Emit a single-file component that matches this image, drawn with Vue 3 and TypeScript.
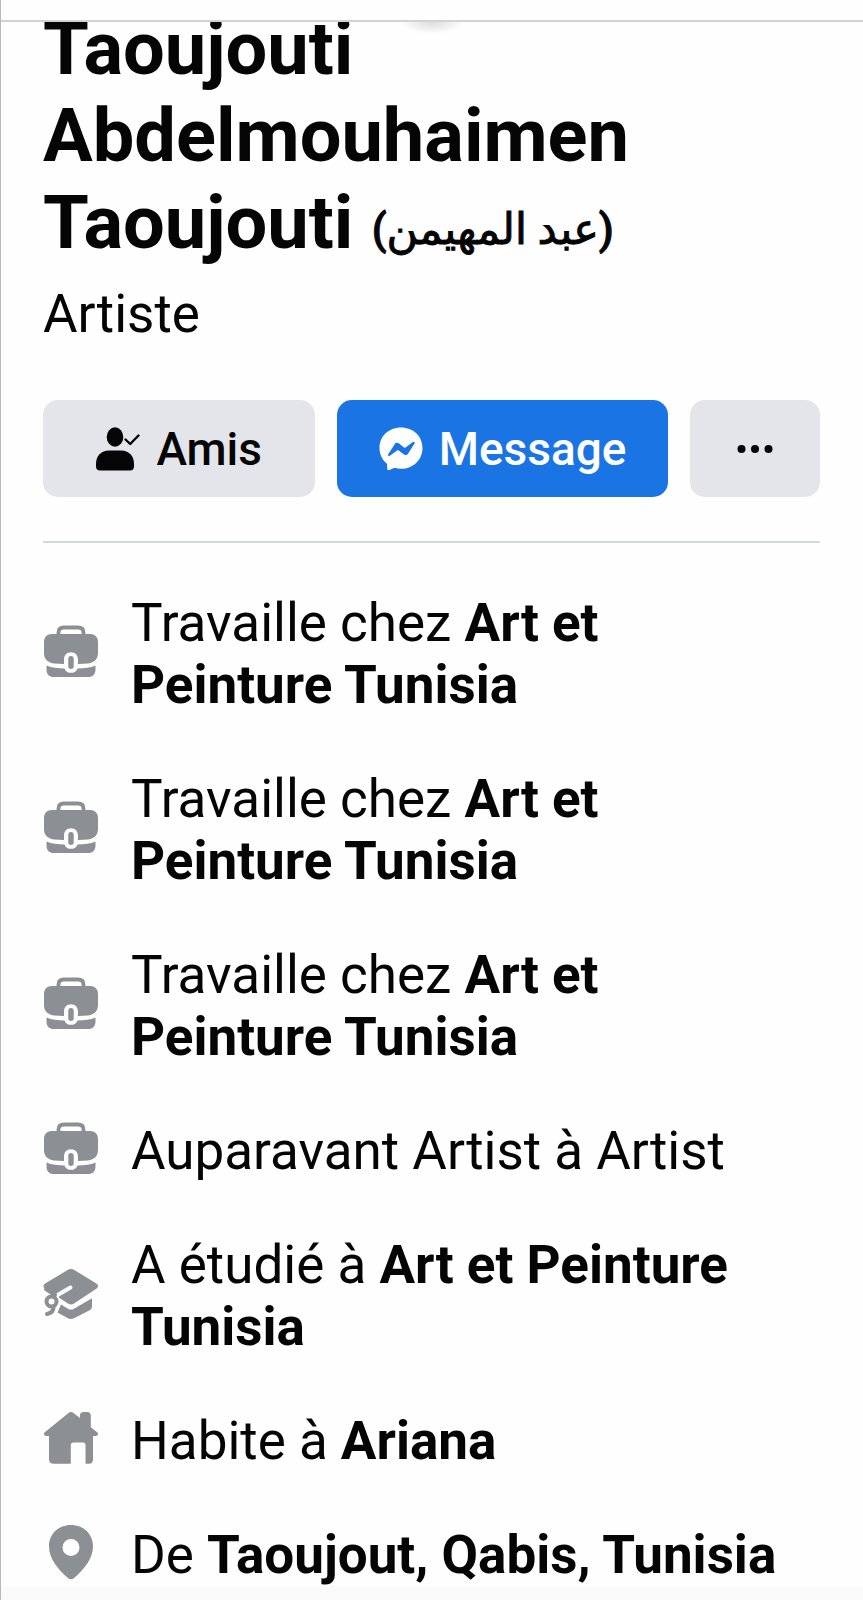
<script setup lang="ts">
type IconName = 'work' | 'study' | 'home' | 'pin'

interface Part {
  text: string
  strong?: boolean
}

interface Detail {
  icon: IconName
  parts: Part[]
}

const details: Detail[] = [
  { icon: 'work', parts: [{ text: 'Travaille chez ' }, { text: 'Art et Peinture Tunisia', strong: true }] },
  { icon: 'work', parts: [{ text: 'Travaille chez ' }, { text: 'Art et Peinture Tunisia', strong: true }] },
  { icon: 'work', parts: [{ text: 'Travaille chez ' }, { text: 'Art et Peinture Tunisia', strong: true }] },
  { icon: 'work', parts: [{ text: 'Auparavant Artist à Artist' }] },
  { icon: 'study', parts: [{ text: 'A étudié à ' }, { text: 'Art et Peinture Tunisia', strong: true }] },
  { icon: 'home', parts: [{ text: 'Habite à ' }, { text: 'Ariana', strong: true }] },
  { icon: 'pin', parts: [{ text: 'De ' }, { text: 'Taoujout, Qabis, Tunisia', strong: true }] },
]
</script>

<template>
  <div class="page">
    <header class="topbar"></header>
    <main class="content">
      <h1 class="name">
        Taoujouti Abdelmouhaimen Taoujouti
        <span class="alt" dir="rtl" lang="ar">(عبد المهيمن)</span>
      </h1>
      <p class="role">Artiste</p>

      <div class="actions">
        <button type="button" class="btn friends">
          <svg class="btn-icon" viewBox="0 0 44 44" aria-hidden="true">
            <ellipse cx="19" cy="10" rx="8.3" ry="9.7" />
            <path d="M13 23.500h12c8 0 13 5.500 13 13.500v2.500c0 2.500-1.500 4-4 4H4c-2.500 0-4-1.500-4-4V37c0-8 5-13.500 13-13.500Z" />
            <path d="M29.500 12.500l4.700 4.500 8.300-8.500" fill="none" stroke="currentColor" stroke-width="2.400" stroke-linecap="round" stroke-linejoin="round" />
          </svg>
          Amis
        </button>
        <button type="button" class="btn message">
          <svg class="btn-icon" viewBox="0 0 44 44" aria-hidden="true">
            <path d="M22 .500C9.700.500.500 9.300.500 21c0 6.200 2.600 11.500 6.900 15.200.4.400.6.800.6 1.300l.2 4c0 1.300 1.200 2 2.300 1.500l4.400-1.900c.4-.2.800-.2 1.200-.1 1.900.5 3.900.8 5.900.8 12.300 0 21.500-9 21.500-20.800S34.300.500 22 .500Z" />
            <path class="bolt" d="M9.200 27.200l6.300-9.800c1.100-1.700 3.100-2 4.600-.8l4.900 3.800c.5.300 1 .3 1.500 0l7.400-5.300c1.100-.8 2.300.4 1.600 1.500l-6.300 9.800c-1.100 1.700-3.100 2-4.600.8l-4.900-3.800c-.5-.3-1-.3-1.500 0l-7.400 5.300c-1.100.8-2.300-.4-1.600-1.500Z" />
          </svg>
          Message
        </button>
        <button type="button" class="btn more" aria-label="Plus d’options">
          <svg class="dots" viewBox="0 0 36 10" aria-hidden="true">
            <circle cx="4.500" cy="5" r="4" />
            <circle cx="18" cy="5" r="4" />
            <circle cx="31.500" cy="5" r="4" />
          </svg>
        </button>
      </div>

      <ul class="details">
        <li v-for="(detail, index) in details" :key="index" class="detail">
          <svg class="detail-icon" viewBox="0 0 56 56" aria-hidden="true">
            <g v-if="detail.icon === 'work'">
              <path d="M15.500 14V8.500c0-3.400 2-5 5.500-5h14c3.500 0 5.500 1.600 5.500 5V14" fill="none" stroke="currentColor" stroke-width="3.800" />
              <path d="M9 10h38c5 0 8 3 8 8v11c0 6-3.500 9.500-10 10.500l-10 .6V36c0-5-2.500-7.800-7-7.800S21 31 21 36v4.100l-10-.6C4.500 38.500 1 35 1 29V18c0-5 3-8 8-8Z" />
              <path d="M3.500 41.500c5 2.300 11 2.800 18 2.900 1 3 3.300 4.400 6.500 4.400s5.500-1.400 6.500-4.400c7-.1 13-.6 18-2.900V45c0 5.500-2.500 8-8 8h-33c-5.500 0-8-2.500-8-8Z" />
              <rect x="25.300" y="32" width="5.400" height="13" rx="2.700" />
            </g>
            <g v-else-if="detail.icon === 'study'">
              <path d="M25 3.800c2-1.100 4-1.100 6 0l22 13.400c2.700 1.600 2.700 4 0 5.700L31 37.500c-2 1.300-4 1.300-6 0L2.500 22.900c-2.700-1.700-2.700-4.100 0-5.700Z" />
              <path d="M18 38.500l7 4.200c2 1.200 4 1.200 6 0l18-10.500V40c0 2-.6 3.200-2.400 4.200L31.500 52c-2.500 1.300-4.500 1.300-7 0L14.500 46.500Z" />
              <path class="slot" d="M27.500 21.500L15 28.800l-3 4" />
              <circle class="slot-fill" cx="8.500" cy="35.500" r="8.600" />
              <path d="M3 23l9 6" class="tassel" />
              <circle cx="8.500" cy="35.500" r="5" class="tassel" />
              <path d="M10.500 41c.2 3.500-2.500 6-6.500 7" class="tassel" />
            </g>
            <g v-else-if="detail.icon === 'home'">
              <path d="M25.500 2c1.700-1.300 3.300-1.300 5 0L37 7V4.500C37 2.300 38.200 1 40.500 1h3.800c2.300 0 3.500 1.300 3.500 3.500v11.800l6.400 5c1.500 1.500.8 3.700-1.400 3.700H50v23.500c0 2.800-1.400 4.300-4.200 4.300H42.500V34c0-1.800-.8-2.600-2.600-2.600h-9.500c-1.800 0-2.600.8-2.600 2.600v18.800H11c-3.300 0-5-1.500-5-4.800V25H3.200C1 25 .3 22.800 1.800 21.300Z" />
            </g>
            <path v-else fill-rule="evenodd" d="M28 0C15.300 0 6 9 6 21.300 6 34 15 44 24.600 52.800c2.400 2 4.400 2 6.800 0C41 44 50 34 50 21.300 50 9 40.700 0 28 0Zm0 14a8.500 8.500 0 1 1 0 17 8.500 8.500 0 0 1 0-17Z" />
          </svg>
          <p class="detail-text">
            <template v-for="(part, i) in detail.parts" :key="i">
              <strong v-if="part.strong">{{ part.text }}</strong>
              <template v-else>{{ part.text }}</template>
            </template>
          </p>
        </li>
      </ul>
    </main>
    <footer class="bottombar"></footer>
  </div>
</template>

<style>
body {
  margin: 0;
  background: #fefefe;
}
</style>

<style scoped>
.page {
  box-sizing: border-box;
  display: flex;
  flex-direction: column;
  min-height: 100vh;
  border-left: 1px solid #b9b9b9;
  color: #050505;
  font-family: Roboto, "DejaVu Sans", sans-serif;
  font-size: 53px;
  line-height: 62px;
}

.topbar {
  height: 20px;
  border-bottom: 2px solid #d2d2d2;
}

.content {
  flex: 1;
  overflow: hidden;
  padding: 0 43px 0 42px;
  background: radial-gradient(ellipse 32px 12px at 50% 0, #dcdcdc, transparent) no-repeat;
}

.name {
  max-width: 640px;
  margin: -17px 0 0;
  font-size: 74px;
  font-weight: 700;
  line-height: 87px;
}

.alt {
  font-size: 43px;
  font-weight: 500;
  line-height: 60px;
  vertical-align: 4px;
  -webkit-text-stroke: 1px currentColor;
}

.role {
  margin: 17px 0 0;
}

.actions {
  display: flex;
  gap: 22px;
  padding: 55px 0 44px;
  border-bottom: 2px solid #d5d8dc;
}

.btn {
  display: flex;
  align-items: center;
  justify-content: center;
  gap: 16px;
  height: 97px;
  padding: 0;
  border: 0;
  border-radius: 15px;
  background: #e4e5ea;
  color: #050505;
  font-family: inherit;
  font-size: 46px;
  font-weight: 500;
  line-height: 60px;
}

.friends {
  flex: 272;
}

.message {
  flex: 330;
  background: #1b74e4;
  color: #fff;
}

.more {
  flex: 130;
}

.btn-icon {
  flex: none;
  width: 44px;
  height: 44px;
  fill: currentColor;
}

.bolt {
  fill: #1b74e4;
}

.dots {
  width: 36px;
  height: 10px;
  fill: currentColor;
}

.details {
  display: flex;
  flex-direction: column;
  gap: 52px;
  margin: 0;
  padding: 49px 0 0;
  list-style: none;
}

.detail {
  display: flex;
  align-items: center;
  gap: 32px;
}

.detail-icon {
  flex: none;
  width: 56px;
  height: 56px;
  margin-bottom: 4px;
  color: #8c8f94;
  fill: currentColor;
}

.slot {
  fill: none;
  stroke: #fefefe;
  stroke-width: 4;
  stroke-linecap: round;
}

.slot-fill {
  fill: #fefefe;
}

.tassel {
  fill: none;
  stroke: currentColor;
  stroke-width: 4;
  stroke-linecap: round;
}

.detail-text {
  flex: 1;
  max-width: 660px;
  margin: 0;
}

.bottombar {
  height: 16px;
  background: #fafafa;
}
</style>
